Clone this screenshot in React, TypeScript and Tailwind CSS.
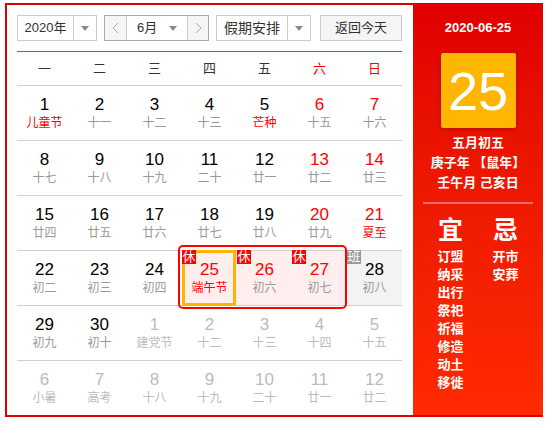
import React from "react";

type Day = {
  n: number;
  l: string;
  red?: boolean;
  fest?: boolean;
  dim?: boolean;
  tag?: "休" | "班";
  pink?: boolean;
  today?: boolean;
  gray?: boolean;
};

const weeks: Day[][] = [
  [
    { n: 1, l: "儿童节", fest: true },
    { n: 2, l: "十一" },
    { n: 3, l: "十二" },
    { n: 4, l: "十三" },
    { n: 5, l: "芒种", fest: true },
    { n: 6, l: "十五", red: true },
    { n: 7, l: "十六", red: true },
  ],
  [
    { n: 8, l: "十七" },
    { n: 9, l: "十八" },
    { n: 10, l: "十九" },
    { n: 11, l: "二十" },
    { n: 12, l: "廿一" },
    { n: 13, l: "廿二", red: true },
    { n: 14, l: "廿三", red: true },
  ],
  [
    { n: 15, l: "廿四" },
    { n: 16, l: "廿五" },
    { n: 17, l: "廿六" },
    { n: 18, l: "廿七" },
    { n: 19, l: "廿八" },
    { n: 20, l: "廿九", red: true },
    { n: 21, l: "夏至", red: true, fest: true },
  ],
  [
    { n: 22, l: "初二" },
    { n: 23, l: "初三" },
    { n: 24, l: "初四" },
    { n: 25, l: "端午节", red: true, fest: true, tag: "休", pink: true, today: true },
    { n: 26, l: "初六", red: true, tag: "休", pink: true },
    { n: 27, l: "初七", red: true, tag: "休", pink: true },
    { n: 28, l: "初八", tag: "班", gray: true },
  ],
  [
    { n: 29, l: "初九" },
    { n: 30, l: "初十" },
    { n: 1, l: "建党节", dim: true },
    { n: 2, l: "十二", dim: true },
    { n: 3, l: "十三", dim: true },
    { n: 4, l: "十四", dim: true },
    { n: 5, l: "十五", dim: true },
  ],
  [
    { n: 6, l: "小暑", dim: true },
    { n: 7, l: "高考", dim: true },
    { n: 8, l: "十八", dim: true },
    { n: 9, l: "十九", dim: true },
    { n: 10, l: "二十", dim: true },
    { n: 11, l: "廿一", dim: true },
    { n: 12, l: "廿二", dim: true },
  ],
];

const weekdays = ["一", "二", "三", "四", "五", "六", "日"];
const yi = ["订盟", "纳采", "出行", "祭祀", "祈福", "修造", "动土", "移徙"];
const ji = ["开市", "安葬"];

function Caret() {
  return (
    <span className="w-0 h-0 border-x-[4px] border-t-[5px] border-x-transparent border-t-[#888]" />
  );
}

function Chevron({ dir }: { dir: "left" | "right" }) {
  return (
    <svg width="7" height="12" viewBox="0 0 7 12" fill="none">
      <path
        d={dir === "left" ? "M6 1 L1 6 L6 11" : "M1 1 L6 6 L1 11"}
        stroke="#aaa"
        strokeWidth="1"
      />
    </svg>
  );
}

function DayCell({ d }: { d: Day }) {
  const numColor = d.dim ? "text-[#bbb]" : d.red ? "text-[#f00]" : "text-black";
  const lunarColor = d.dim ? "text-[#bbb]" : d.fest ? "text-[#f00]" : "text-[#999]";
  const bg = d.pink ? "bg-[#ffeeee]" : d.gray ? "bg-[#f3f3f3]" : "";
  return (
    <div className={`relative w-[55px] h-full flex flex-col items-center pt-[10px] ${bg}`}>
      {d.today && (
        <div className="absolute -top-[1px] -bottom-[1px] left-0 right-[1px] border-[3px] border-[#ffb400]" />
      )}
      {d.tag && (
        <span
          className={`absolute -top-[1px] left-0 z-10 w-[14px] h-[14px] text-[13px] leading-[14px] text-center text-white overflow-hidden ${
            d.tag === "休" ? "bg-[#f00]" : "bg-[#999]"
          }`}
        >
          {d.tag}
        </span>
      )}
      <span className={`relative text-[17px] leading-[18px] ${numColor}`}>{d.n}</span>
      <span className={`relative text-[12px] leading-[18px] ${lunarColor}`}>{d.l}</span>
    </div>
  );
}

export default function App() {
  return (
    <div className="w-[550px] h-[424px] bg-white pt-[3px] pl-[5px] font-[Liberation_Sans,Noto_Sans_CJK_SC,sans-serif]">
      <div className="flex w-[538px] h-[414px] border-2 border-r-0 border-[#dd0000]">
        {/* calendar */}
        <div className="w-[406px] pl-[10px] pr-[11px] pt-[10px]">
          <div className="flex h-[26px] text-[13px] text-[#333]">
            <div className="flex w-[80px] border border-[#ccc]">
              <div className="w-[55px] flex items-center justify-center">2020年</div>
              <div className="flex-1 flex items-center justify-center border-l border-[#ccc]">
                <Caret />
              </div>
            </div>
            <div className="ml-[7px] flex w-[105px] border border-[#aaa]">
              <div className="w-[22px] flex items-center justify-center bg-[#f5f5f5] border-r border-[#ccc]">
                <Chevron dir="left" />
              </div>
              <div className="w-[60px] flex items-center justify-between pl-[10px] pr-[10px]">
                <span>6月</span>
                <Caret />
              </div>
              <div className="flex-1 flex items-center justify-center bg-[#f5f5f5] border-l border-[#ccc]">
                <Chevron dir="right" />
              </div>
            </div>
            <div className="ml-[7px] flex w-[95px] border border-[#ccc]">
              <div className="w-[70px] flex items-center justify-center text-[14px]">假期安排</div>
              <div className="flex-1 flex items-center justify-center border-l border-[#ccc]">
                <Caret />
              </div>
            </div>
            <button className="ml-auto w-[82px] border border-[#ccc] bg-[#f5f5f5] text-[13px] text-[#333]">
              返回今天
            </button>
          </div>

          <div className="mt-[10px] border-t border-[#e33]">
            <div className="flex h-[34px] border-b border-[#d0d0d0] text-[13px]">
              {weekdays.map((w, i) => (
                <div
                  key={w}
                  className={`w-[55px] flex items-center justify-center ${
                    i >= 5 ? "text-[#f00]" : "text-[#333]"
                  }`}
                >
                  {w}
                </div>
              ))}
            </div>
            <div className="relative">
              {weeks.map((week, wi) => (
                <div
                  key={wi}
                  className={`flex h-[55px] ${wi < 5 ? "border-b border-[#d0d0d0]" : "h-[54px]"}`}
                >
                  {week.map((d, di) => (
                    <DayCell key={di} d={d} />
                  ))}
                </div>
              ))}
              {/* holiday frame */}
              <div className="absolute left-[161px] top-[159px] w-[169px] h-[64px] border-2 border-[#f00] rounded-[5px] pointer-events-none" />
            </div>
          </div>
        </div>

        {/* side panel */}
        <div className="w-[130px] h-full bg-linear-to-b from-[#e00000] to-[#ff2a00] flex flex-col items-center text-white">
          <div className="pt-[15px] text-[13px] leading-[16px] font-bold">2020-06-25</div>
          <div className="mt-[17px] w-[75px] h-[75px] rounded-[2px] bg-[#ffb600] shadow-[0_1px_4px_rgba(0,0,0,0.25)] flex items-center justify-center text-[54px] leading-none">
            25
          </div>
          <div className="mt-[5px] text-[13px] leading-[20px] font-bold text-center">
            <div>五月初五</div>
            <div>庚子年 【鼠年】</div>
            <div>壬午月 己亥日</div>
          </div>
          <div className="mt-[9px] w-[110px] h-[2px] bg-[#ff6a6a]" />
          <div className="mt-[12px] flex">
            <div className="w-[55px] flex flex-col items-center">
              <div className="text-[25px] leading-[28px] font-bold">宜</div>
              <div className="mt-[4px] text-[13px] leading-[18px] font-bold flex flex-col items-center">
                {yi.map((t) => (
                  <span key={t}>{t}</span>
                ))}
              </div>
            </div>
            <div className="w-[55px] flex flex-col items-center">
              <div className="text-[25px] leading-[28px] font-bold">忌</div>
              <div className="mt-[4px] text-[13px] leading-[18px] font-bold flex flex-col items-center">
                {ji.map((t) => (
                  <span key={t}>{t}</span>
                ))}
              </div>
            </div>
          </div>
        </div>
      </div>
    </div>
  );
}
